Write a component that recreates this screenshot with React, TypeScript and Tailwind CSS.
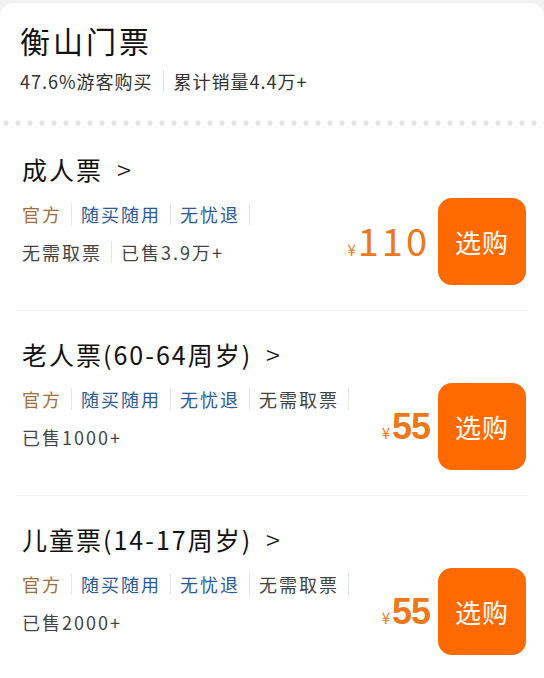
import React from 'react';

interface Ticket {
  name: string;
  tags: { text: string; tone: 'gold' | 'blue' | 'gray' }[];
  extra: string[];
  price: string;
  bold: boolean;
}

const tickets: Ticket[] = [
  {
    name: '成人票',
    tags: [
      { text: '官方', tone: 'gold' },
      { text: '随买随用', tone: 'blue' },
      { text: '无忧退', tone: 'blue' },
    ],
    extra: ['无需取票', '已售3.9万+'],
    price: '110',
    bold: false,
  },
  {
    name: '老人票(60-64周岁)',
    tags: [
      { text: '官方', tone: 'gold' },
      { text: '随买随用', tone: 'blue' },
      { text: '无忧退', tone: 'blue' },
      { text: '无需取票', tone: 'gray' },
    ],
    extra: ['已售1000+'],
    price: '55',
    bold: true,
  },
  {
    name: '儿童票(14-17周岁)',
    tags: [
      { text: '官方', tone: 'gold' },
      { text: '随买随用', tone: 'blue' },
      { text: '无忧退', tone: 'blue' },
      { text: '无需取票', tone: 'gray' },
    ],
    extra: ['已售2000+'],
    price: '55',
    bold: true,
  },
];

const toneClass = {
  gold: 'text-[#a0703c]',
  blue: 'text-[#2c5a9a]',
  gray: 'text-[#444444]',
};

const Divider = () => <span className="mx-[9px] h-[22px] w-px bg-[#e6e6e6]" />;

const TicketRow = ({ t, last }: { t: Ticket; last: boolean }) => (
  <div className="px-[22px]">
    <div className="pt-[25px] pb-[11px] text-[25px] leading-[36px] tracking-[2px] text-[#111111]">
      {t.name}
      <span className="ml-[14px] text-[26px] font-light">&gt;</span>
    </div>
    <div className="flex items-start justify-between pb-[25px]">
      <div className="flex flex-col gap-[12px] pt-[3px] text-[18px] leading-[26px] tracking-[2px]">
        <div className="flex items-center">
          {t.tags.map((tag) => (
            <React.Fragment key={tag.text}>
              <span className={toneClass[tag.tone]}>{tag.text}</span>
              <Divider />
            </React.Fragment>
          ))}
        </div>
        <div className="flex items-center text-[#444444]">
          {t.extra.map((e, i) => (
            <React.Fragment key={e}>
              {i > 0 && <Divider />}
              <span>{e}</span>
            </React.Fragment>
          ))}
        </div>
      </div>
      <div className="-mr-[4px] flex items-center gap-[8px]">
        <div className="flex items-baseline text-[#ee7818]">
          <span className="mr-[2px] text-[15px]">¥</span>
          <span
            className={
              t.bold
                ? "text-[36px] leading-none font-bold tracking-[-1px] font-['Liberation_Sans',sans-serif]"
                : 'text-[38px] leading-none font-normal tracking-[3px]'
            }
          >
            {t.price}
          </span>
        </div>
        <button className="flex h-[87px] w-[88px] items-center justify-center rounded-[14px] bg-[#ff6a00] text-[26px] tracking-[1px] text-white">
          选购
        </button>
      </div>
    </div>
    {!last && <div className="-mx-[6px] h-px bg-[#efefef]" />}
  </div>
);

export default function App() {
  return (
    <div className="min-h-[678px] w-[544px] bg-[#f2f2f2] pt-[3px] font-['Noto_Sans_CJK_SC','Noto_Sans',sans-serif]">
      <div className="min-h-[675px] rounded-t-[14px] bg-white">
        <div className="px-[20px] pt-[17px]">
          <div className="text-[30px] leading-[40px] tracking-[3px] text-[#111111]">衡山门票</div>
          <div className="mt-[8px] flex items-center text-[18px] leading-[26px] tracking-[1px] text-[#333333]">
            <span>47.6%游客购买</span>
            <span className="mx-[10px] h-[22px] w-px bg-[#e0e0e0]" />
            <span>累计销量4.4万+</span>
          </div>
        </div>
        <div className="mt-[26px] h-[6px] bg-[radial-gradient(circle,#e4e4e4_2.2px,transparent_2.8px)] bg-[length:12px_6px]" />
        {tickets.map((t, i) => (
          <TicketRow key={t.name} t={t} last={i === tickets.length - 1} />
        ))}
      </div>
    </div>
  );
}
